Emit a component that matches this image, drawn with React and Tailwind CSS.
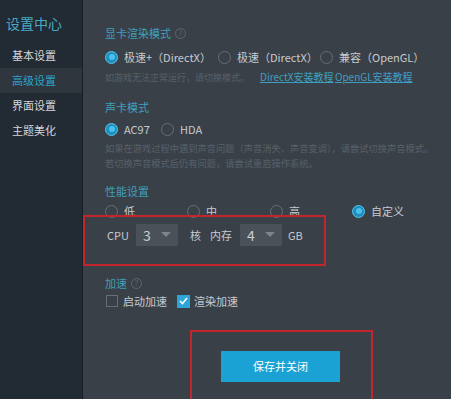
const font = { fontFamily: '"Noto Sans CJK SC", "Noto Sans", sans-serif' }

const menu = ['基本设置', '高级设置', '界面设置', '主题美化']

function Radio({ on, label, className = '' }) {
  return (
    <div className={`flex h-[16px] shrink-0 items-center gap-[6px] ${className}`}>
      {on ? (
        <span className="flex h-[13px] w-[13px] items-center justify-center rounded-full border border-[#58c3ea] bg-[#1d8fbf]">
          <span className="h-[6px] w-[6px] rounded-full bg-[#4cc0ec]" />
        </span>
      ) : (
        <span className="h-[13px] w-[13px] rounded-full border border-[#666e76]" />
      )}
      <span className="text-[11px] leading-none text-[#c6cbd0]">{label}</span>
    </div>
  )
}

function Help() {
  return <span className="ml-[4px] flex h-[11px] w-[11px] items-center justify-center rounded-full border border-[#5d666e] text-[8px] leading-none text-[#5d666e]">?</span>
}

function Title({ children, help, className = '' }) {
  return (
    <div className={`flex h-[14px] items-center text-[11px] leading-none text-[#3f9fbb] ${className}`}>
      {children}
      {help && <Help />}
    </div>
  )
}

function Select({ value }) {
  return (
    <div className="flex h-[22px] w-[42px] shrink-0 items-center justify-between bg-[#4a5158] px-[7px]">
      <span className="text-[14px] leading-none text-[#c9ced3]">{value}</span>
      <svg width="10" height="6" viewBox="0 0 10 6"><path d="M0 0h10L5 5z" fill="#7d858c" /></svg>
    </div>
  )
}

export default function App() {
  return (
    <div className="relative flex h-[399px] w-[451px] overflow-hidden bg-[#3a4047]" style={font}>
      <aside className="w-[83px] shrink-0 border-r border-[#1a1f25] bg-[#222a34]">
        <div className="px-[6px] pt-[13px] text-[14px] text-[#4aa9c2]">设置中心</div>
        <div className="mt-[9px]">
          {menu.map((m) => (
            <div key={m} className={`flex h-[25px] items-center pl-[12px] text-[11px] ${m === '高级设置' ? 'bg-[#2f363e] text-[#2ba3cd]' : 'text-[#d4d8dc]'}`}>{m}</div>
          ))}
        </div>
      </aside>

      <main className="flex-1 pl-[22px] pt-[26px]">
        <Title help>显卡渲染模式</Title>
        <div className="mt-[9px] flex">
          <Radio on label="极速+（DirectX）" className="w-[113px]" />
          <Radio label="极速（DirectX）" className="w-[102px]" />
          <Radio label="兼容（OpenGL）" />
        </div>
        <div className="mt-[5px] flex h-[14px] items-center whitespace-nowrap leading-none">
          <span className="w-[155px] text-[9px] text-[#58616a]">如游戏无法正常运行，请切换模式。</span>
          <span className="w-[75px] text-[10px] text-[#3f9fc2] underline">DirectX安装教程</span>
          <span className="text-[10px] text-[#3f9fc2] underline">OpenGL安装教程</span>
        </div>

        <Title className="mt-[16px]">声卡模式</Title>
        <div className="mt-[7px] flex">
          <Radio on label="AC97" className="w-[56px]" />
          <Radio label="HDA" />
        </div>
        <p className="mt-[4px] whitespace-nowrap text-[9.25px] leading-[15px] text-[#58616a]">
          如果在游戏过程中遇到声音问题（声音消失、声音变调），请尝试切换声音模式。
          <br />
          若切换声音模式后仍有问题，请尝试重启操作系统。
        </p>

        <Title className="mt-[13px]">性能设置</Title>
        <div className="mt-[5px] flex">
          <Radio label="低" className="w-[82px]" />
          <Radio label="中" className="w-[83px]" />
          <Radio label="高" className="w-[82px]" />
          <Radio on label="自定义" />
        </div>
        <div className="mt-[5px] flex h-[22px] items-center text-[11px] leading-none text-[#c6cbd0]">
          <span className="ml-[2px] w-[29px] shrink-0">CPU</span>
          <Select value="3" />
          <span className="ml-[12px] w-[20px] shrink-0">核</span>
          <span className="w-[30px] shrink-0">内存</span>
          <Select value="4" />
          <span className="ml-[6px]">GB</span>
        </div>

        <Title help className="mt-[30px]">加速</Title>
        <div className="mt-[3px] flex h-[16px] items-center text-[11px] leading-none text-[#c6cbd0]">
          <span className="ml-[1px] h-[12px] w-[12px] shrink-0 border border-[#666e76]" />
          <span className="ml-[5px] w-[54px] shrink-0">启动加速</span>
          <span className="flex h-[13px] w-[13px] shrink-0 items-center justify-center bg-[#2ba6d8]">
            <svg width="9" height="8" viewBox="0 0 9 8"><path d="M1 4l2.5 2.5L8 1" stroke="#fff" strokeWidth="1.6" fill="none" /></svg>
          </span>
          <span className="ml-[4px]">渲染加速</span>
        </div>

        <div className="ml-[116px] mt-[42px] flex h-[31px] w-[119px] items-center justify-center bg-[#1ba2d4] text-[11px] text-white">保存并关闭</div>
      </main>

      <div className="absolute left-[83px] top-[215px] h-[51px] w-[243px] border-2 border-[#c4252c]" />
      <div className="absolute left-[190px] top-[330px] h-[80px] w-[183px] border-2 border-[#c4252c]" />
    </div>
  )
}
